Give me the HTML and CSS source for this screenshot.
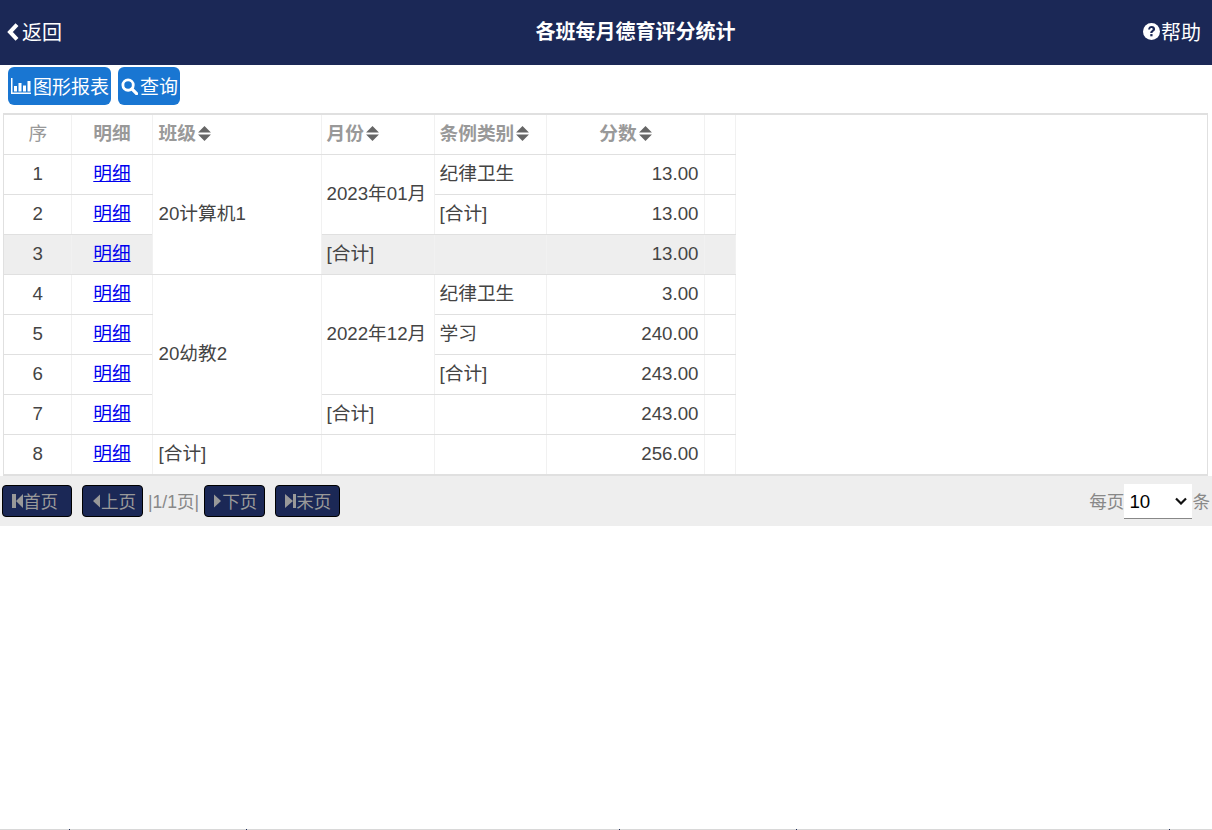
FILE: index.html
```html
<!DOCTYPE html>
<html lang="zh">
<head>
<meta charset="utf-8">
<title>各班每月德育评分统计</title>
<link rel="stylesheet" href="styles.css">
</head>
<body>
<div class="page">
  <header class="topbar">
    <a class="top-link"><svg class="ico-back" viewBox="0 0 12 18"><path d="M10 1.700 3 9l7 7.300" fill="none" stroke="#fff" stroke-width="4"/></svg>返回</a>
    <h1 class="title">各班每月德育评分统计</h1>
    <a class="top-link"><svg class="ico-help" viewBox="0 0 18 18"><circle cx="9" cy="9" r="9" fill="#fff"/><path d="M5.400 6.800C5.700 4.500 7.200 3.300 9.200 3.300c2.100 0 3.600 1.300 3.600 3.100 0 2.600-2.700 2.500-2.700 4.300H7.700c0-3 2.500-2.900 2.500-4.200 0-.7-.5-1.100-1.200-1.100-.8 0-1.300.5-1.500 1.400z" fill="#1b2856"/><rect x="7.700" y="11.700" width="2.400" height="2.400" fill="#1b2856"/></svg>帮助</a>
  </header>
  <div class="toolbar">
    <button class="btn"><svg class="ico-chart" viewBox="0 0 20 16"><path d="M0 0h1.500v14.500H20V16H0z" fill="#fff"/><path d="M3 8h3v5.500H3zM7.500 5h3v8.500h-3zM12 7.500h3v6h-3zM16.500 3h3v10.500h-3z" fill="#fff"/></svg>图形报表</button>
    <button class="btn"><svg class="ico-search" viewBox="0 0 18 18"><circle cx="7.500" cy="7.500" r="5.500" fill="none" stroke="#fff" stroke-width="3"/><path d="m11.500 11.500 5 5" stroke="#fff" stroke-width="3.400" stroke-linecap="round"/></svg>查询</button>
  </div>
  <div class="table-wrap">
    <table class="grid">
      <colgroup>
        <col class="c-seq"><col class="c-detail"><col class="c-class"><col class="c-month"><col class="c-cat"><col class="c-score"><col class="c-end">
      </colgroup>
      <thead>
        <tr>
          <th class="center seq-head">序</th>
          <th class="center">明细</th>
          <th class="cls">班级<svg class="sort" viewBox="0 0 12 14"><path d="M6 0l6 6H0zM0 8h12l-6 6z"/></svg></th>
          <th>月份<svg class="sort" viewBox="0 0 12 14"><path d="M6 0l6 6H0zM0 8h12l-6 6z"/></svg></th>
          <th>条例类别<svg class="sort" viewBox="0 0 12 14"><path d="M6 0l6 6H0zM0 8h12l-6 6z"/></svg></th>
          <th class="center">分数<svg class="sort" viewBox="0 0 12 14"><path d="M6 0l6 6H0zM0 8h12l-6 6z"/></svg></th>
          <th></th>
        </tr>
      </thead>
      <tbody>
        <tr><td class="center">1</td><td class="center"><a href="#">明细</a></td><td class="cls" rowspan="3">20计算机1</td><td rowspan="2">2023年01月</td><td>纪律卫生</td><td class="num">13.00</td><td></td></tr>
        <tr><td class="center">2</td><td class="center"><a href="#">明细</a></td><td>[合计]</td><td class="num">13.00</td><td></td></tr>
        <tr class="sub"><td class="center">3</td><td class="center"><a href="#">明细</a></td><td>[合计]</td><td></td><td class="num">13.00</td><td></td></tr>
        <tr><td class="center">4</td><td class="center"><a href="#">明细</a></td><td class="cls" rowspan="4">20幼教2</td><td rowspan="3">2022年12月</td><td>纪律卫生</td><td class="num">3.00</td><td></td></tr>
        <tr><td class="center">5</td><td class="center"><a href="#">明细</a></td><td>学习</td><td class="num">240.00</td><td></td></tr>
        <tr><td class="center">6</td><td class="center"><a href="#">明细</a></td><td>[合计]</td><td class="num">243.00</td><td></td></tr>
        <tr><td class="center">7</td><td class="center"><a href="#">明细</a></td><td>[合计]</td><td></td><td class="num">243.00</td><td></td></tr>
        <tr><td class="center">8</td><td class="center"><a href="#">明细</a></td><td class="cls">[合计]</td><td></td><td></td><td class="num">256.00</td><td></td></tr>
      </tbody>
    </table>
  </div>
  <div class="pager">
    <button class="pg pg-first"><svg class="pg-ico" viewBox="0 0 11 16"><path d="M0 1h4v14H0zM4 8l7-7v14z"/></svg>首页</button>
    <button class="pg pg-prev"><svg class="pg-ico-s" viewBox="0 0 7 16"><path d="M7 1.500v13L0 8z"/></svg>上页</button>
    <span class="pg-info">|1/1页|</span>
    <button class="pg pg-next"><svg class="pg-ico-s" viewBox="0 0 7 16"><path d="M0 1.500v13L7 8z"/></svg>下页</button>
    <button class="pg pg-last"><svg class="pg-ico" viewBox="0 0 11 16"><path d="M0 1l8 7-8 7zM8 1h3v14H8z"/></svg>末页</button>
    <div class="pg-size">每页<select class="size-sel"><option>10</option><option>20</option></select>条</div>
  </div>
  <footer class="tabbar"><span></span><span></span><span></span><span></span><span></span></footer>
</div>
</body>
</html>
```

FILE: styles.css
```css
* { box-sizing: border-box; }
html, body { margin: 0; padding: 0; }
body {
  font-family: "Liberation Sans", "Noto Sans CJK SC", sans-serif;
  font-size: 18.72px;
  color: #444;
  background: #fff;
}
.page { min-height: 100vh; display: flex; flex-direction: column; }

.topbar {
  height: 65px;
  background: #1b2856;
  color: #fff;
  display: flex;
  align-items: center;
  padding: 0 11px 2px 7px;
}
.top-link { display: flex; align-items: center; font-size: 20px; }
.title { flex: 1; margin: 0; padding-left: 66px; font-size: 20px; font-weight: 700; text-align: center; line-height: 26px; }
.ico-back { width: 12px; height: 18px; margin-right: 3px; }
.ico-help { width: 17px; height: 17px; margin-right: 1px; }

.toolbar { height: 48px; padding: 2px 8px 0; display: flex; gap: 7px; align-items: flex-start; }
.btn {
  height: 38px;
  border: 0;
  border-radius: 6px;
  background: #1976d2;
  color: #fff;
  font: inherit;
  font-size: 19px;
  padding: 0 2px 2px;
  display: flex;
  align-items: center;
}
.ico-chart { width: 20px; height: 16px; margin: 2px 2px 0 1px; }
.ico-search { width: 17px; height: 17px; margin: 3px 2px 0 1px; }

.table-wrap {
  height: 363px;
  border-top: 2px solid #e0e0e0;
  border-bottom: 2px solid #e0e0e0;
  border-left: 1px solid #e0e0e0;
  border-right: 1px solid #e0e0e0;
  margin: 0 4px 0 3px;
}
.grid { border-collapse: collapse; table-layout: fixed; width: 731px; }
.c-seq { width: 67px; }
.c-detail { width: 81px; }
.c-class { width: 169px; }
.c-month { width: 113px; }
.c-cat { width: 112px; }
.c-score { width: 158px; }
.c-end { width: 31px; }
.grid th, .grid td {
  height: 40px;
  padding: 0 5px;
  border: 1px solid #f1f1f1;
  border-bottom-color: #e0e0e0;
  border-top-color: #e0e0e0;
  font-size: 18.72px;
  font-weight: 400;
  text-align: left;
  line-height: 24px;
}
.grid tr > :first-child { border-left: 0; }
.grid th { height: 39px; font-weight: 700; color: #999; border-top: 0; }
.grid th.seq-head { font-weight: 400; }
.grid tbody td[rowspan] { padding-bottom: 1px; }
.grid .center { padding-left: 6px; text-align: center; }
.grid .cls { padding-left: 6px; }
.grid .num { text-align: right; }
.grid a { color: #00e; text-decoration: underline; }
.sub td { background: #eee; }
.sort { width: 13px; height: 15px; fill: #666; margin-left: 2px; vertical-align: -1px; }

.pager {
  height: 50px;
  background: #eee;
  display: flex;
  align-items: center;
  padding: 0 2px;
  color: #888;
  font-size: 17.6px;
}
.pg {
  height: 32px;
  background: #1b2856;
  border: 1px solid #000;
  border-radius: 4px;
  color: #999;
  font: inherit;
  padding: 0 0 2px 9px;
  display: flex;
  align-items: center;
  margin-right: 10px;
}
.pg-first { width: 70px; }
.pg-prev { width: 61px; margin-right: 5px; }
.pg-next { width: 61px; padding-left: 8px; }
.pg-last { width: 65px; }
.pg-info { margin-right: 5px; padding-bottom: 2px; }
.pg-ico { width: 11px; height: 16px; fill: #999; margin-top: 2px; }
.pg-ico-s { width: 7px; height: 16px; fill: #999; margin: 2px 1px 0; }
.pg-size { margin-left: auto; display: flex; align-items: center; padding-bottom: 2px; }
.size-sel {
  appearance: none;
  width: 68px;
  height: 35px;
  margin-top: 3px;
  border: 0;
  border-bottom: 1px solid #888;
  background: #fff url("data:image/svg+xml,%3Csvg xmlns='http://www.w3.org/2000/svg' viewBox='0 0 12 8'%3E%3Cpath d='M1 1.500l5 5 5-5' fill='none' stroke='%23111' stroke-width='2.200'/%3E%3C/svg%3E") no-repeat right 5px center / 12px 8px;
  color: #000;
  font: inherit;
  font-size: 18.72px;
  padding: 0 0 0 5px;
  border-radius: 0;
}

.tabbar {
  margin-top: auto;
  height: 1px;
  background: #d8d8d8;
  display: grid;
  grid-template-columns: 70px 177px 373px 177px 373px 1fr;
}
.tabbar span { border-right: 1px solid #1b2856; }
```
